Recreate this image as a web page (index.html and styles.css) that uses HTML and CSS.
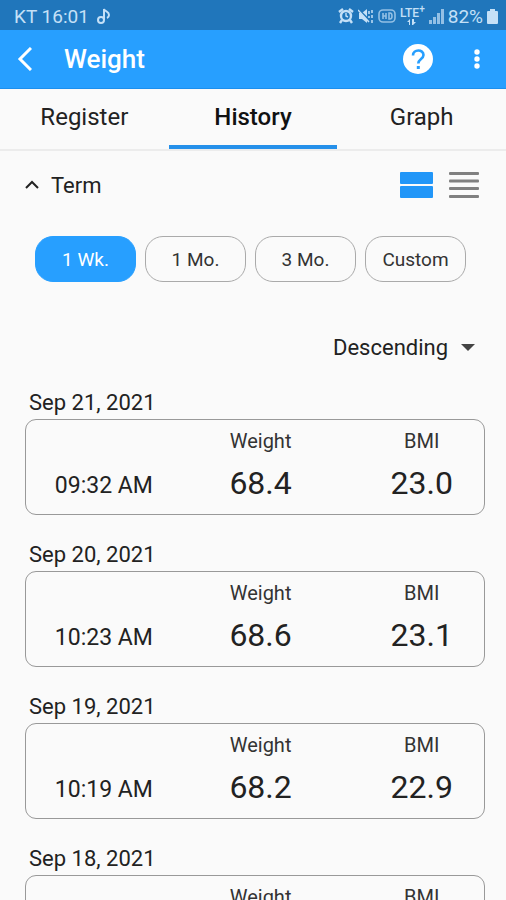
FILE: index.html
```html
<!DOCTYPE html>
<html lang="en">
<head>
    <meta charset="UTF-8">
    <meta name="viewport" content="width=device-width, initial-scale=1.0">
    <title>Weight</title>
    <link rel="stylesheet" href="styles.css">
</head>
<body>
    <div class="status-bar">
        <span>KT 16:01</span>
        <svg class="note" width="14" height="18" viewBox="0 0 14 18" fill="none" stroke="currentColor" stroke-width="2">
            <circle cx="4" cy="13" r="3"/>
            <path d="M7 13V2c1 3 5 2 5 6q0 2-2 3"/>
        </svg>
        <div class="status-icons">
            <svg width="16" height="16" viewBox="0 0 16 16" fill="none" stroke="currentColor" stroke-width="2.4">
                <circle cx="8" cy="8" r="5"/>
                <path d="M1 4l4-3M15 4l-4-3M4 12l-2 3M12 12l2 3"/>
                <path d="M8 5v3l2 1" stroke-width="1.4"/>
            </svg>
            <svg width="16" height="16" viewBox="0 0 16 16">
                <path d="M1 5h3l5-4v14l-5-4H1z" fill="currentColor"/>
                <path d="M1 2l12 12" stroke="#2076bb" stroke-width="2"/>
                <path d="M0 2l11 12M11 3v3M11 8v2M14 2v3M14 7v3M14 12v3" fill="none" stroke="currentColor" stroke-width="1.5"/>
            </svg>
            <svg class="dim" width="18" height="14" viewBox="0 0 18 14" fill="none" stroke="currentColor" stroke-width="1.6">
                <rect x="1" y="1" width="16" height="12" rx="4"/>
                <path d="M5 4v6M8 4v6M5 7h3M11 4v6h1q2 0 2-3t-2-3z"/>
            </svg>
            <div class="lte">
                <span>LTE<sup>+</sup></span>
                <svg width="10" height="6" viewBox="0 0 10 6" fill="currentColor">
                    <path d="M2 6V3H0l3-3v6zM5 0h2v3h2L6 6H5z"/>
                </svg>
            </div>
            <svg class="dim" width="15" height="15" viewBox="0 0 15 15" fill="currentColor">
                <path d="M0 11h3v4H0zM4 8h3v7H4zM8 4h3v11H8zM12 0h3v15h-3z"/>
            </svg>
            <span>82%</span>
            <svg width="11" height="15" viewBox="0 0 11 15" fill="currentColor">
                <path d="M3 0h5v2h2q1 0 1 1v11q0 1-1 1H1q-1 0-1-1V3q0-1 1-1h2z"/>
            </svg>
        </div>
    </div>

    <header class="header">
        <button class="icon-button" aria-label="Back">
            <svg width="16" height="24" viewBox="0 0 16 24" fill="none" stroke="currentColor" stroke-width="3">
                <path d="M15 1L4 12l11 11"/>
            </svg>
        </button>
        <h1>Weight</h1>
        <button class="icon-button help" aria-label="Help">
            <svg width="30" height="30" viewBox="0 0 30 30">
                <circle cx="15" cy="15" r="15" fill="#fff"/>
                <path d="M10 11.500c0-6.500 10.500-6.500 10.500-.500 0 4-5.200 4-5.200 8.500" fill="none" stroke="#279fff" stroke-width="2.600"/>
                <rect x="13.800" y="22" width="3" height="3" fill="#279fff"/>
            </svg>
        </button>
        <button class="icon-button" aria-label="More">
            <svg width="6" height="22" viewBox="0 0 6 22" fill="currentColor">
                <circle cx="3" cy="4" r="2.700"/>
                <circle cx="3" cy="11" r="2.700"/>
                <circle cx="3" cy="18" r="2.700"/>
            </svg>
        </button>
    </header>

    <nav class="tabs">
        <a href="#register">Register</a>
        <a href="#history" class="active">History</a>
        <a href="#graph">Graph</a>
    </nav>

    <main>
        <div class="toolbar">
            <button class="term">
                <svg width="14" height="10" viewBox="0 0 14 10" fill="none" stroke="currentColor" stroke-width="2">
                    <path d="M1 8l6-6 6 6"/>
                </svg>
                Term
            </button>
            <div class="views">
                <button class="view selected" aria-label="Card view">
                    <svg width="33" height="26" viewBox="0 0 33 26" fill="currentColor">
                        <rect width="33" height="12" rx="1"/>
                        <rect y="14" width="33" height="12" rx="1"/>
                    </svg>
                </button>
                <button class="view" aria-label="List view">
                    <svg width="30" height="26" viewBox="0 0 30 26" fill="currentColor">
                        <rect width="30" height="3" rx="1"/>
                        <rect y="7.500" width="30" height="3" rx="1"/>
                        <rect y="15" width="30" height="3" rx="1"/>
                        <rect y="23" width="30" height="3" rx="1"/>
                    </svg>
                </button>
            </div>
        </div>

        <div class="periods">
            <button class="period selected">1 Wk.</button>
            <button class="period">1 Mo.</button>
            <button class="period">3 Mo.</button>
            <button class="period">Custom</button>
        </div>

        <div class="sort">
            <select aria-label="Sort order">
                <option>Descending</option>
            </select>
            <svg width="14" height="7" viewBox="0 0 14 7" fill="currentColor">
                <path d="M0 0h14L7 7z"/>
            </svg>
        </div>

        <section class="record">
            <h2>Sep 21, 2021</h2>
            <div class="card">
                <table>
                    <thead>
                        <tr><td></td><th>Weight</th><th>BMI</th></tr>
                    </thead>
                    <tbody>
                        <tr><td class="time">09:32 AM</td><td>68.4</td><td>23.0</td></tr>
                    </tbody>
                </table>
            </div>
        </section>
        <section class="record">
            <h2>Sep 20, 2021</h2>
            <div class="card">
                <table>
                    <thead>
                        <tr><td></td><th>Weight</th><th>BMI</th></tr>
                    </thead>
                    <tbody>
                        <tr><td class="time">10:23 AM</td><td>68.6</td><td>23.1</td></tr>
                    </tbody>
                </table>
            </div>
        </section>
        <section class="record">
            <h2>Sep 19, 2021</h2>
            <div class="card">
                <table>
                    <thead>
                        <tr><td></td><th>Weight</th><th>BMI</th></tr>
                    </thead>
                    <tbody>
                        <tr><td class="time">10:19 AM</td><td>68.2</td><td>22.9</td></tr>
                    </tbody>
                </table>
            </div>
        </section>
        <section class="record">
            <h2>Sep 18, 2021</h2>
            <div class="card">
                <table>
                    <thead>
                        <tr><td></td><th>Weight</th><th>BMI</th></tr>
                    </thead>
                </table>
            </div>
        </section>
    </main>
</body>
</html>
```
FILE: styles.css
```css
* {
    box-sizing: border-box;
}
body {
    display: flex;
    flex-direction: column;
    height: 100vh;
    margin: 0;
    overflow: hidden;
    background-color: #fafafa;
    color: #222;
    font-family: Roboto, sans-serif;
}
button, select {
    margin: 0;
    padding: 0;
    border: none;
    background: none;
    color: inherit;
    font-family: inherit;
    cursor: pointer;
}
svg {
    display: block;
    flex: none;
}
.status-bar {
    display: flex;
    flex: none;
    align-items: center;
    height: 30px;
    padding: 2px 8px 0 14px;
    background-color: #2076bb;
    color: #c4e0f7;
    font-size: 19px;
}
.note {
    margin-left: 8px;
}
.status-icons {
    display: flex;
    align-items: center;
    gap: 4px;
    margin-left: auto;
}
.dim {
    opacity: 0.7;
}
.lte {
    display: flex;
    flex-direction: column;
    align-items: center;
    font-size: 12px;
    font-weight: 500;
    line-height: 12px;
}
.lte sup {
    font-size: 10px;
    line-height: 0;
}
.header {
    display: flex;
    flex: none;
    align-items: center;
    height: 59px;
    padding: 0 26px 0 16px;
    border-bottom: 1px solid #1c8fee;
    background-color: #279fff;
    color: #fff;
}
.header h1 {
    margin: 0 auto 0 32px;
    font-size: 26px;
    font-weight: 500;
}
.help {
    margin-right: 41px;
}
.tabs {
    display: flex;
    flex: none;
    height: 62px;
    border-bottom: 2px solid #ececec;
}
.tabs a {
    flex: 1;
    height: 60px;
    border-bottom: 4px solid transparent;
    color: #222;
    font-size: 24px;
    line-height: 56px;
    text-align: center;
    text-decoration: none;
}
.tabs .active {
    border-color: #2590ea;
    color: #111;
    font-weight: 500;
}
main {
    padding: 18px 21px 0 25px;
}
.toolbar {
    display: flex;
    justify-content: space-between;
    align-items: center;
    height: 32px;
    padding-right: 6px;
}
.term {
    display: flex;
    align-items: center;
    gap: 12px;
    font-size: 22px;
}
.views {
    display: flex;
    gap: 16px;
}
.view {
    color: #808080;
}
.view.selected {
    color: #2196f8;
}
.periods {
    display: flex;
    gap: 9px;
    margin-top: 35px;
    padding: 0 19px 0 10px;
}
.period {
    flex: 1;
    height: 46px;
    border: 1px solid #aaa;
    border-radius: 18px;
    color: #333;
    font-size: 19px;
}
.period.selected {
    border-color: #279fff;
    background-color: #279fff;
    color: #fff;
}
.sort {
    display: flex;
    justify-content: flex-end;
    align-items: center;
    gap: 12px;
    margin: 48px 0 23px;
    padding-right: 10px;
    color: #444;
}
.sort select {
    appearance: none;
    height: 34px;
    color: #222;
    font-size: 22px;
}
.record {
    margin-bottom: 24px;
}
.record h2 {
    margin: 0;
    padding-left: 4px;
    font-size: 22px;
    font-weight: 400;
    line-height: 32px;
}
.card {
    height: 96px;
    padding-top: 6px;
    border: 1px solid #999;
    border-radius: 11px;
}
table {
    width: 100%;
    border-collapse: collapse;
    table-layout: fixed;
}
th, td {
    width: 34%;
    height: 30px;
    padding: 0 0 0 2px;
    font-weight: 400;
    text-align: center;
}
th {
    color: #333;
    font-size: 20px;
}
th:last-child, td:last-child {
    width: 32%;
    padding-left: 22px;
}
tbody td {
    height: 54px;
    font-size: 32px;
}
tbody .time {
    padding: 4px 0 0;
    font-size: 23px;
}
```
